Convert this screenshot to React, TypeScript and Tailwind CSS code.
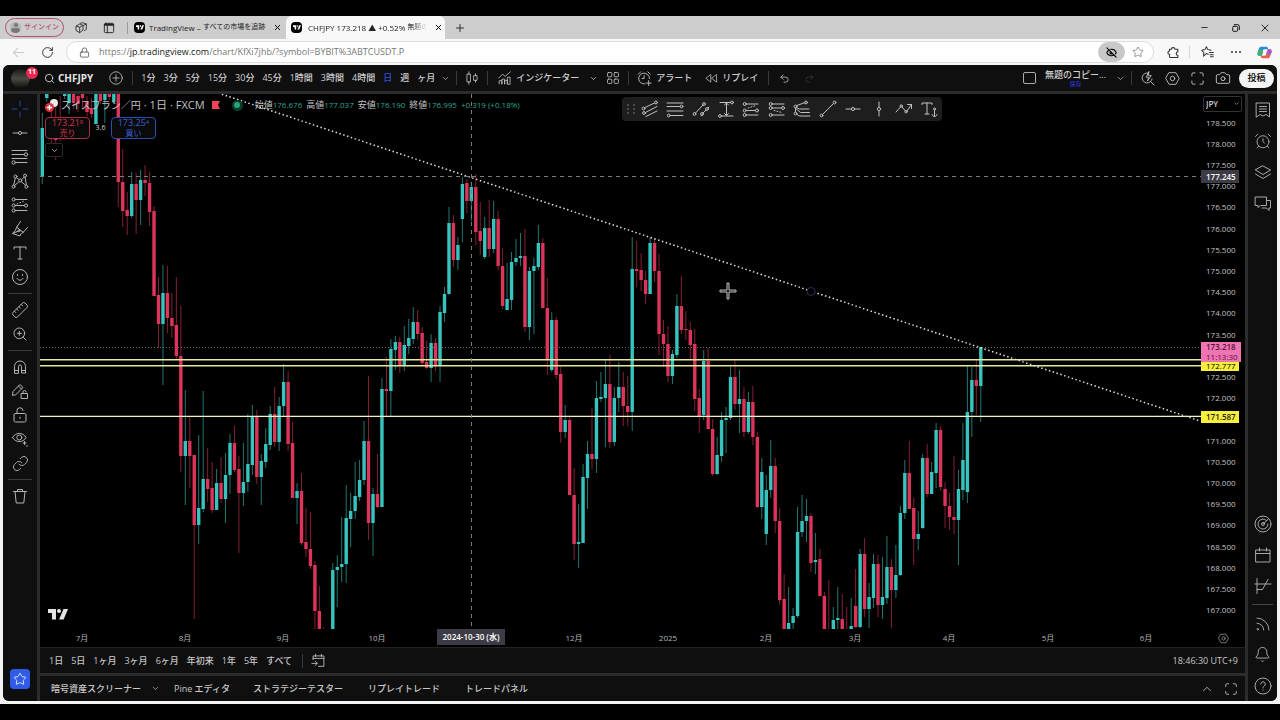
import type { ReactNode } from "react";
import {
  AlarmClock,
  Bell,
  Camera,
  ChevronDown,
  ChevronUp,
  EyeOff,
  Link,
  Lock,
  Maximize,
  Minus,
  Plus,
  Redo2,
  RotateCw,
  Rss,
  Ruler,
  Search,
  Star,
  Undo2,
  X,
  ZoomIn,
} from "lucide-react";

const UI_FONT = "font-['Open_Sans','Noto_Sans_CJK_JP',sans-serif]";

// u = up / d = down, then high, body top, body bottom, low
type Candle = ["u" | "d", number, number, number, number];

const FIRST_X = 42.3;
const STEP = 4.469;

const candles: Candle[] = [
  ["u", 113, 128, 177, 184], ["u", 94, 94, 98, 102], ["d", 100, 132, 136, 143], ["d", 100, 132, 140, 160], ["d", 96, 120, 130, 141],
  ["u", 94, 94, 96, 99], ["u", 94, 94, 103, 114], ["d", 94, 94, 103, 109], ["d", 94, 96, 104, 112], ["d", 94, 94, 98, 108],
  ["d", 96, 102, 112, 116], ["d", 98, 108, 114, 118], ["u", 94, 94, 124, 124], ["d", 94, 94, 101, 104], ["u", 94, 94, 100, 123],
  ["d", 94, 94, 97, 100], ["u", 94, 94, 102, 104], ["d", 94, 94, 182, 207], ["d", 149, 182, 211, 227], ["d", 192, 210, 216, 235],
  ["u", 172, 184, 216, 218], ["d", 173, 184, 200, 234], ["u", 170, 180, 200, 225], ["d", 165, 180, 183, 196], ["d", 172, 183, 212, 226],
  ["d", 206, 211, 296, 296], ["d", 277, 295, 324, 348], ["u", 265, 293, 324, 385], ["d", 266, 293, 318, 333], ["d", 293, 318, 326, 338],
  ["d", 277, 325, 356, 360], ["d", 306, 356, 456, 472], ["u", 390, 441, 456, 505], ["d", 416, 441, 456, 488], ["d", 455, 455, 525, 619],
  ["u", 435, 508, 525, 544], ["u", 391, 479, 509, 512], ["d", 448, 479, 489, 502], ["d", 462, 488, 510, 513], ["u", 469, 483, 510, 510],
  ["d", 457, 483, 499, 503], ["u", 453, 475, 499, 523], ["u", 434, 443, 475, 494], ["d", 426, 443, 470, 472], ["d", 456, 469, 493, 553],
  ["u", 443, 482, 493, 506], ["u", 414, 464, 482, 492], ["u", 405, 416, 465, 475], ["d", 410, 416, 477, 484], ["u", 454, 461, 477, 505],
  ["u", 428, 444, 462, 468], ["u", 406, 414, 445, 450], ["d", 387, 414, 442, 447], ["u", 397, 406, 442, 451], ["u", 364, 382, 406, 417],
  ["d", 371, 382, 444, 451], ["d", 422, 443, 498, 498], ["u", 483, 491, 498, 524], ["d", 473, 491, 543, 545], ["d", 508, 542, 549, 557],
  ["d", 512, 549, 566, 569], ["d", 561, 565, 611, 629], ["d", 586, 611, 629, 629], ["d", 627, 629, 629, 629], ["d", 629, 629, 629, 629],
  ["u", 563, 570, 629, 629], ["u", 555, 567, 570, 607], ["u", 517, 564, 567, 582], ["u", 485, 518, 564, 583], ["u", 493, 511, 519, 547],
  ["u", 462, 496, 511, 519], ["u", 460, 480, 497, 501], ["u", 421, 441, 480, 485], ["d", 376, 441, 523, 540], ["u", 488, 494, 523, 556],
  ["d", 454, 494, 507, 508], ["u", 378, 389, 507, 507], ["d", 357, 389, 391, 416], ["u", 339, 349, 391, 416], ["u", 336, 342, 350, 370],
  ["d", 337, 342, 366, 373], ["u", 326, 345, 366, 371], ["u", 319, 338, 346, 354], ["u", 307, 322, 339, 344], ["d", 310, 322, 334, 340],
  ["d", 327, 333, 363, 365], ["d", 341, 362, 368, 369], ["u", 334, 343, 368, 382], ["d", 338, 343, 366, 371], ["u", 306, 312, 366, 382],
  ["u", 287, 294, 313, 322], ["u", 207, 223, 294, 295], ["d", 215, 223, 260, 267], ["u", 237, 245, 260, 270], ["u", 177, 184, 219, 242],
  ["d", 179, 183, 201, 213], ["u", 182, 187, 201, 221], ["d", 174, 187, 232, 245], ["d", 202, 231, 241, 255], ["u", 217, 228, 257, 259],
  ["d", 200, 228, 249, 257], ["u", 201, 219, 249, 253], ["d", 211, 219, 266, 270], ["d", 248, 266, 306, 309], ["u", 263, 299, 310, 310],
  ["u", 252, 262, 300, 310], ["u", 239, 258, 262, 266], ["u", 233, 256, 258, 266], ["d", 229, 256, 327, 332], ["u", 267, 271, 327, 340],
  ["u", 258, 266, 271, 334], ["u", 225, 243, 267, 270], ["d", 238, 243, 308, 308], ["d", 278, 308, 360, 375], ["u", 312, 320, 370, 372],
  ["d", 317, 320, 375, 379], ["d", 367, 374, 432, 443], ["u", 405, 420, 432, 438], ["d", 416, 420, 495, 495], ["d", 468, 495, 544, 560],
  ["u", 504, 542, 544, 568], ["u", 464, 477, 543, 543], ["u", 441, 454, 478, 509], ["d", 408, 454, 459, 469], ["u", 381, 398, 459, 473],
  ["u", 372, 397, 399, 402], ["u", 359, 384, 398, 447], ["d", 355, 384, 442, 448], ["u", 387, 398, 442, 446], ["u", 362, 387, 398, 412],
  ["d", 372, 387, 406, 426], ["d", 376, 406, 412, 426], ["u", 237, 269, 412, 431], ["d", 241, 269, 271, 287], ["d", 253, 270, 280, 291],
  ["d", 271, 280, 294, 304], ["u", 237, 243, 294, 294], ["d", 239, 243, 271, 282], ["d", 254, 271, 334, 355], ["d", 320, 334, 344, 367],
  ["d", 326, 344, 376, 382], ["u", 350, 354, 376, 384], ["u", 294, 306, 355, 358], ["d", 276, 306, 330, 334], ["d", 311, 329, 330, 340],
  ["d", 322, 330, 345, 360], ["d", 329, 344, 399, 411], ["d", 389, 398, 416, 433], ["u", 350, 361, 415, 420], ["d", 348, 361, 429, 429],
  ["d", 419, 429, 474, 476], ["u", 437, 455, 474, 475], ["u", 412, 420, 456, 462], ["u", 407, 418, 420, 453], ["u", 367, 377, 418, 420],
  ["d", 359, 377, 404, 410], ["u", 370, 399, 404, 433], ["d", 387, 399, 432, 437], ["u", 392, 402, 432, 434], ["d", 386, 402, 437, 445],
  ["d", 432, 437, 507, 508], ["u", 458, 472, 507, 519], ["u", 475, 490, 534, 545], ["u", 440, 466, 490, 498], ["d", 458, 466, 521, 533],
  ["d", 508, 521, 600, 605], ["d", 574, 599, 629, 629], ["u", 587, 623, 629, 629], ["u", 608, 616, 623, 629], ["u", 507, 532, 616, 618],
  ["u", 495, 521, 532, 537], ["u", 499, 516, 521, 542], ["d", 513, 516, 563, 572], ["u", 533, 560, 562, 574], ["d", 549, 559, 596, 597],
  ["d", 592, 596, 629, 629], ["d", 580, 629, 629, 629], ["u", 607, 620, 629, 629], ["u", 587, 618, 620, 629], ["d", 594, 619, 629, 629],
  ["d", 607, 629, 629, 629], ["u", 598, 626, 629, 629], ["d", 569, 606, 627, 628], ["u", 549, 554, 627, 628], ["d", 538, 554, 609, 617],
  ["u", 583, 597, 609, 628], ["u", 554, 564, 598, 608], ["d", 555, 564, 605, 617], ["u", 557, 597, 605, 619], ["u", 536, 567, 598, 604],
  ["d", 559, 567, 590, 628], ["u", 545, 575, 590, 598], ["u", 506, 513, 575, 576], ["u", 460, 473, 513, 519], ["d", 441, 473, 509, 509],
  ["d", 498, 508, 539, 565], ["u", 511, 534, 539, 550], ["u", 454, 458, 528, 529], ["d", 444, 458, 494, 497], ["u", 462, 472, 494, 494],
  ["u", 423, 430, 473, 488], ["d", 426, 430, 487, 491], ["d", 482, 489, 506, 528], ["d", 493, 506, 517, 530], ["d", 456, 517, 520, 534],
  ["u", 470, 489, 520, 565], ["u", 423, 460, 490, 500], ["u", 366, 412, 492, 503], ["u", 367, 380, 412, 437], ["d", 359, 380, 386, 415],
  ["u", 347, 347, 386, 422],
];

// 171.500 sits right under the alert line label, so its row stays blank
const prices = Array.from({ length: 24 }, (_, i) => (178.5 - i * 0.5).toFixed(3));
const hiddenPrice = "171.500";

const months = [
  { label: "7月", at: 42 },
  { label: "8月", at: 145 },
  { label: "9月", at: 243 },
  { label: "10月", at: 337 },
  { label: "12月", at: 534 },
  { label: "2025", at: 628 },
  { label: "2月", at: 726 },
  { label: "3月", at: 815 },
  { label: "4月", at: 909 },
  { label: "5月", at: 1008 },
  { label: "6月", at: 1106 },
];

const intervals = ["1分", "3分", "5分", "15分", "30分", "45分", "1時間", "3時間", "4時間", "日", "週", "ヶ月"];
const ranges = ["1日", "5日", "1ヶ月", "3ヶ月", "6ヶ月", "年初来", "1年", "5年", "すべて"];

const quotes = [
  { label: "始値", value: "176.676" },
  { label: "高値", value: "177.037" },
  { label: "安値", value: "176.190" },
  { label: "終値", value: "176.995" },
];

function Icon({ children, className = "size-[18px]" }: { children: ReactNode; className?: string }) {
  return (
    <svg
      viewBox="0 0 18 18"
      fill="none"
      stroke="currentColor"
      strokeLinecap="round"
      strokeLinejoin="round"
      className={`shrink-0 ${className}`}
      aria-hidden="true"
    >
      {children}
    </svg>
  );
}

function TvMark({ className }: { className: string }) {
  return (
    <svg viewBox="0 0 20 11" fill="currentColor" className={className} aria-hidden="true">
      <path d="M0 0h8v10.500H4V4H0z" />
      <circle cx="11" cy="2" r="2" />
      <path d="M15.500 0H20l-4.400 10.500h-4.500z" />
    </svg>
  );
}

type Tool = { name: string; icon: ReactNode; active?: boolean };

const drawTools: Tool[][] = [
  [
    { name: "クロス", active: true, icon: <Icon><path d="M9 1v5M9 12v5M1 9h5M12 9h5" /></Icon> },
    { name: "トレンドライン", icon: <Icon><path d="M2 9h5M11 9h5" /><circle cx="9" cy="9" r="1.600" /></Icon> },
    {
      name: "フィボナッチ",
      icon: (
        <Icon>
          <path d="M1 2.500h15M1 6.500h12M1 10.500h15M5 14.500h11" />
          <circle cx="15" cy="6.500" r="1.700" />
          <circle cx="2.700" cy="14.500" r="1.700" />
        </Icon>
      ),
    },
    {
      name: "パターン",
      icon: (
        <Icon>
          <path d="M2.500 14 4.500 5l5 3.500L14 4.500 15.500 14 9.500 9z" />
          <circle cx="4.500" cy="4.500" r="1.500" fill="#0f0f0f" />
          <circle cx="14" cy="3.700" r="1.500" fill="#0f0f0f" />
          <circle cx="9.300" cy="8.500" r="1.500" fill="#0f0f0f" />
          <circle cx="2.500" cy="14.700" r="1.500" fill="#0f0f0f" />
          <circle cx="15.300" cy="14.700" r="1.500" fill="#0f0f0f" />
        </Icon>
      ),
    },
    {
      name: "予測",
      icon: (
        <Icon>
          <path d="M4.500 3.500H16M4.500 9.500h8.500M4.500 14.500H16" />
          <path d="M6 8l7-3" strokeDasharray="1 2" />
          <circle cx="2.700" cy="3.500" r="1.600" />
          <circle cx="2.700" cy="9.500" r="1.600" />
          <circle cx="15" cy="9.500" r="1.600" />
          <circle cx="2.700" cy="14.500" r="1.600" />
        </Icon>
      ),
    },
    {
      name: "ブラシ",
      icon: <Icon><path d="M9.500 1.500 5.500 7.500M16.500 7.500l-4.500 5M5.500 7.500C5 10 3.500 11.500 1.500 13.500l7.500 2.500c0-1.500 1-2.500 3-3.500zM1.500 13.500l6-2.500" /><circle cx="8" cy="10.800" r="1" /></Icon>,
    },
    { name: "テキスト", icon: <Icon><path d="M3 5V3h12v2M9 3v12M7 15h4" /></Icon> },
    {
      name: "アイコン",
      icon: (
        <Icon>
          <circle cx="9" cy="9" r="7.500" />
          <path d="M6.500 6.500v1M11.500 6.500v1M6 10.500c1.500 2.300 4.500 2.300 6 0" />
        </Icon>
      ),
    },
  ],
  [
    { name: "計測", icon: <Ruler className="size-[18px] -scale-x-100" strokeWidth={1.3} /> },
    { name: "ズームイン", icon: <ZoomIn className="size-[16px]" strokeWidth={1.5} /> },
  ],
  [
    {
      name: "マグネット",
      icon: <Icon><path d="M3.500 15V8.500a5.500 5.500 0 0 1 11 0V15h-4V8.500a1.500 1.500 0 0 0-3 0V15zM3.500 12.500h4M10.500 12.500h4" /></Icon>,
    },
    {
      name: "描画モードを維持",
      icon: (
        <Icon>
          <path d="M1.500 13 2 9.500 9 2.500l3 3L5 12.500zM7.500 4l3 3" />
          <path d="M10.500 11.500h6v5h-6zM12 11.500v-1.500a1.500 1.500 0 0 1 3 0" />
        </Icon>
      ),
    },
    {
      name: "ロック",
      icon: (
        <Icon>
          <rect x="3" y="7.500" width="12" height="8.500" rx="1.500" />
          <path d="M6 7.500V5a3 3 0 0 1 6-.500M9 11.200v1.200" />
        </Icon>
      ),
    },
    {
      name: "非表示",
      icon: (
        <Icon>
          <path d="M1.500 7.500C4.500 2 12 2 15 7.500 12 13 4.500 13 1.500 7.500z" />
          <circle cx="8.300" cy="7.500" r="2.500" />
          <path d="M12 13l3 0M13.500 11.500v3M15.500 16h1" />
        </Icon>
      ),
    },
    { name: "リンク", icon: <Link className="size-[17px]" strokeWidth={1.3} /> },
  ],
  [
    { name: "削除", icon: <Icon><path d="M2.500 4.500h13M6.500 4.500V2.500h5v2M4 4.500 5.200 16h7.600L14 4.500" /></Icon> },
  ],
];

const favoriteTools: Tool[] = [
  {
    name: "平行チャネル",
    icon: (
      <Icon>
        <path d="M4 7.500 13.500 3M4.500 12.500 16 6.500M5 16.500l11-5.500" />
        <circle cx="2.500" cy="8.500" r="1.400" />
        <circle cx="15" cy="2.500" r="1.400" />
        <circle cx="3" cy="13" r="1.400" />
      </Icon>
    ),
  },
  {
    name: "フィボナッチリトレースメント",
    icon: (
      <Icon>
        <path d="M1 3h16M1 6.500h13M1 11h16M4.500 15.500H17" />
        <circle cx="15.500" cy="6.500" r="1.400" />
        <circle cx="2.700" cy="15.500" r="1.400" />
      </Icon>
    ),
  },
  {
    name: "フラットチャネル",
    icon: (
      <Icon>
        <path d="M3.500 13 11 5M9 16l2-1.500M11 13l3-3M16 8l1-1" />
        <circle cx="2.500" cy="14" r="1.400" />
        <circle cx="12" cy="4" r="1.400" />
        <circle cx="10" cy="14" r="1.400" />
        <circle cx="15" cy="9" r="1.400" />
      </Icon>
    ),
  },
  {
    name: "価格範囲",
    icon: (
      <Icon>
        <path d="M3 2.500h10.500M4.500 16H16M9.500 3v12.500M7.500 5l2-2 2 2M7.500 13.500l2 2 2-2" />
        <circle cx="15" cy="2.500" r="1.400" />
        <circle cx="3" cy="16" r="1.400" />
      </Icon>
    ),
  },
  {
    name: "ロングポジション",
    icon: (
      <Icon>
        <path d="M4.500 4H16M4.500 10.500h8.500M4.500 15H16" />
        <path d="M6 8l8-2.500" strokeDasharray="1 2" />
        <circle cx="2.700" cy="4" r="1.500" />
        <circle cx="2.700" cy="10.500" r="1.500" />
        <circle cx="15" cy="10.500" r="1.500" />
        <circle cx="2.700" cy="15" r="1.500" />
      </Icon>
    ),
  },
  {
    name: "ショートポジション",
    icon: (
      <Icon>
        <path d="M4.500 4H16M4.500 8h8.500M4.500 15H16" />
        <path d="M6 10.500l8 2" strokeDasharray="1 2" />
        <circle cx="2.700" cy="4" r="1.500" />
        <circle cx="2.700" cy="8" r="1.500" />
        <circle cx="15" cy="8" r="1.500" />
        <circle cx="2.700" cy="15" r="1.500" />
      </Icon>
    ),
  },
  {
    name: "フィボナッチスピード",
    icon: (
      <Icon>
        <path d="M2.500 8v4M4 5.500 12 2.500M3.500 7.500l3 1.500H16M3.500 9l4 3.500h9M4 14.500l2.500 1.500H17" />
        <circle cx="2.500" cy="6.500" r="1.400" />
        <circle cx="13" cy="2.500" r="1.400" />
        <circle cx="2.500" cy="13.500" r="1.400" />
      </Icon>
    ),
  },
  {
    name: "トレンドライン",
    icon: (
      <Icon>
        <path d="M3.500 14.500l11-11" />
        <circle cx="2.500" cy="15.500" r="1.400" />
        <circle cx="15.500" cy="2.500" r="1.400" />
      </Icon>
    ),
  },
  { name: "水平線", icon: <Icon><path d="M2 9h5M11 9h5" /><circle cx="9" cy="9" r="1.600" /></Icon> },
  { name: "垂直線", icon: <Icon><path d="M9 2v5M9 11v5" /><circle cx="9" cy="9" r="1.600" /></Icon> },
  {
    name: "パス",
    icon: <Icon><path d="M1 12 5.500 7M7 7l3.500 4M12 11l4.500-6.500M12.500 4.500h4v4" /><circle cx="6.200" cy="6" r="1.200" /><circle cx="11" cy="11.700" r="1.200" /></Icon>,
  },
  {
    name: "アンカーテキスト",
    icon: <Icon><path d="M2 4.500V3h10v1.500M7 3v11M5 14h4M14.500 10v6.500M12 14.500c.500 1.300 1.300 2 2.500 2s2-.700 2.500-2" /><circle cx="14.500" cy="9" r="1" /></Icon>,
  },
];

const sideTop: Tool[] = [
  { name: "ウォッチリスト", icon: <Icon><path d="M2.500 2h13v14L12 13.500 9 15l-3-1.500L2.500 16zM5.500 5.500h7M5.500 8h7M5.500 10.500h7" /></Icon> },
  { name: "アラート", icon: <AlarmClock className="size-[18px]" strokeWidth={1.3} /> },
  { name: "オブジェクトツリー", icon: <Icon><path d="M9 3l7.500 4L9 11.500 1.500 7zM1.500 11 9 15.500l7.500-4.500" /></Icon> },
  { name: "チャット", icon: <Icon><path d="M1.500 3h11v8.500h-6L4 13.500v-2H1.500zM12.500 6.500h4V14H15v2.500L12.500 14H8" /></Icon> },
];

const sideMiddle: Tool[] = [
  {
    name: "スクリーナー",
    icon: (
      <Icon>
        <circle cx="9" cy="9" r="8" />
        <path d="M12.500 5.500a5 5 0 1 0 1.500 3.500M9 9l5.500-5" />
        <circle cx="9" cy="9" r="1.500" />
      </Icon>
    ),
  },
  { name: "カレンダー", icon: <Icon><path d="M2 4h14v12H2zM2 7.500h14M5.500 2v3M12.500 2v3" /></Icon> },
  { name: "マイスクリプト", icon: <Icon><path d="M3 1.500v15M1 7h16M3 12.500h5.500L14 2.500" /></Icon> },
];

const sideBottom: Tool[] = [
  { name: "ストリーム", icon: <Rss className="size-[18px]" strokeWidth={1.3} /> },
  { name: "通知", icon: <Bell className="size-[17px]" strokeWidth={1.4} /> },
  {
    name: "ヘルプ",
    icon: (
      <Icon>
        <circle cx="9" cy="9" r="8" />
        <path d="M6.700 7a2.300 2.300 0 1 1 3.500 2c-.800.500-1.200.900-1.200 2M9 13v.300" />
      </Icon>
    ),
  },
];

function TabIcon() {
  return (
    <span className="flex size-[11px] shrink-0 items-center justify-center rounded-sm bg-black text-white">
      <TvMark className="h-[5px] w-[8px]" />
    </span>
  );
}

function BrowserTabs() {
  return (
    <>
      <div className="flex w-[156px] items-center gap-1 pr-1 pl-1">
        <TabIcon />
        <span className="flex flex-1 items-center whitespace-nowrap text-[8px] text-[#222]">
          TradingView –&nbsp;<span className="text-[7px]">すべての市場を追跡</span>
        </span>
        <button aria-label="タブを閉じる">
          <X className="size-[9px] text-black" strokeWidth={2.5} />
        </button>
      </div>
      <div className="flex w-[159px] items-center gap-[6px] rounded-t-md bg-[#f8f8f8] pr-[5px] pl-[5px]">
        <TabIcon />
        <span className="flex flex-1 items-center whitespace-nowrap mask-r-from-85% text-[8px] text-[#222]">
          CHFJPY 173.218 ▲ +0.52%&nbsp;<span className="text-[7px]">無題の</span>
        </span>
        <button aria-label="タブを閉じる">
          <X className="size-[9px] text-black" strokeWidth={2.5} />
        </button>
      </div>
    </>
  );
}

function BrowserChrome() {
  return (
    <>
      <div className="flex h-[23px] shrink-0 bg-[#cdcdcd]">
        <div className="flex items-center pl-[5px]">
          <button className="flex h-[19px] w-[59px] items-center gap-[3px] rounded-full border border-[#b4506a] pl-1 text-[7px] text-[#b0304e]">
            <span className="relative block size-[11px] overflow-hidden rounded-full bg-[#b5b5b5]">
              <span className="mx-auto mt-px block size-[4px] rounded-full bg-[#777]" />
              <span className="mx-auto mt-px block h-[5px] w-[9px] rounded-full bg-[#777]" />
            </span>
            サインイン
          </button>
          <button aria-label="ワークスペース" className="ml-[11px] text-[#333]">
            <Icon className="size-[12px]">
              <path d="M2 6l5-3 5 2v7l-5 4-5-3zM2 6l5 2v8M7 8l5-3M8 2l3-1 6 2v8l-3 2M17 3l-4 2" strokeWidth="1.400" />
            </Icon>
          </button>
          <button aria-label="タブ操作" className="ml-4 text-[#222]">
            <Icon className="size-[12px]">
              <rect x="2" y="2" width="14" height="14" rx="2" strokeWidth="1.400" />
              <path d="M3 4h12" strokeWidth="3" />
              <path d="M6.500 6v10" strokeWidth="1.400" />
            </Icon>
          </button>
          <div className="mr-[2px] ml-3 h-3 w-px bg-[#999]" />
        </div>
        <BrowserTabs />
        <button aria-label="新しいタブ" className="ml-[9px]">
          <Plus className="size-[12px] text-[#333]" />
        </button>
        <div className="ml-auto flex items-center gap-[18px] pr-[9px] text-black">
          <button aria-label="最小化"><Minus className="size-[9px]" /></button>
          <button aria-label="元に戻す" className="ml-1">
            <Icon className="size-[10px]">
              <rect x="3" y="6" width="9" height="9" rx="2" strokeWidth="1.600" />
              <path d="M6 3h6a3 3 0 0 1 3 3v6" strokeWidth="1.600" />
            </Icon>
          </button>
          <button aria-label="閉じる"><X className="size-[12px]" strokeWidth={1.6} /></button>
        </div>
      </div>
      <div className="flex h-[26px] shrink-0 items-center bg-[#f8f8f8] pr-2 pl-3 text-[#333]">
        <button aria-label="戻る" className="text-[#c8c8c8]">
          <Icon className="size-[13px]"><path d="M2 9h14M8 3 2 9l6 6" strokeWidth="1.400" /></Icon>
        </button>
        <button aria-label="更新" className="ml-4">
          <RotateCw className="size-[13px]" strokeWidth={1.8} />
        </button>
        <div className="ml-3 flex h-[22px] flex-1 items-center rounded-full border border-[#dedede] bg-white pl-3">
          <Lock className="size-[11px] text-[#555]" strokeWidth={1.8} />
          <a href="#chart" className="ml-[9px] text-[9px] text-[#777]">
            https://<span className="text-[#222]">jp.tradingview.com</span>/chart/KfXi7jhb/?symbol=BYBIT%3ABTCUSDT.P
          </a>
          <button aria-label="プライバシー" className="ml-auto flex h-5 w-[27px] items-center justify-center rounded-full bg-[#c8c8c8] text-black">
            <EyeOff className="size-[11px]" strokeWidth={2.6} />
          </button>
          <button aria-label="お気に入りに追加" className="mr-[9px] ml-[7px]">
            <Star className="size-[12px] text-[#777]" strokeWidth={1.6} />
          </button>
        </div>
        <button aria-label="拡張機能" className="ml-[13px]">
          <Icon className="size-[13px]">
            <path d="M6 4.500c0-3 5-3 5 0h4v3.500c-3 0-3 5 0 5v3H5c-1 0-1.500-.500-1.500-1.500v-3c-3 0-3-4.500 0-4.500V4.500z" strokeWidth="1.500" />
          </Icon>
        </button>
        <div className="mx-[9px] h-3 w-px bg-[#d5d5d5]" />
        <button aria-label="お気に入り" className="ml-[2px]">
          <Icon className="size-[13px]">
            <path d="M10 11.500 7.500 10.500 3.500 14l.500-5L1 6l4.500-1 2-4 2 4L14 6M11.500 9H17M12.500 12H17M13 15h4" strokeWidth="1.400" />
          </Icon>
        </button>
        <button aria-label="設定など" className="ml-[17px] flex gap-[2px]">
          <span className="size-[2px] rounded-full bg-[#333]" />
          <span className="size-[2px] rounded-full bg-[#333]" />
          <span className="size-[2px] rounded-full bg-[#333]" />
        </button>
        <button aria-label="Copilot" className="ml-4">
          <svg viewBox="0 0 18 18" className="size-[15px]">
            <path d="M5 2h6c2 0 2 1 2.500 3H9C7.500 5 7 6 6.500 8L5 13H3C0 13 0 10 1 8l1.500-4C3 2.500 4 2 5 2z" fill="#2a8be0" />
            <path d="M1 9c0 3 1 4 3 4h2l1.500-5L5 5 2 6z" fill="#46b06a" />
            <path d="M13 5h2c3 0 3 3 2 5l-1.500 4c-.500 1.500-1.500 2-2.500 2H7c-2 0-2-1-2.500-3H9c1.500 0 2-1 2.500-3z" fill="#e8604f" />
            <path d="M13 5h2c3 0 3 3 2 5l-2 2-4-2z" fill="#a45ad8" />
          </svg>
        </button>
      </div>
    </>
  );
}

function Divider({ className = "" }: { className?: string }) {
  return <div className={`h-[14px] w-px shrink-0 bg-[#3a3a3a] ${className}`} />;
}

function Header() {
  return (
    <header className="flex h-[26px] shrink-0 items-center bg-[#0f0f0f] text-[9px] font-medium text-[#cfcfcf]">
      <button aria-label="メニュー" className="relative ml-2 size-[19px] shrink-0">
        <span className="block size-full rounded-full bg-linear-to-b from-[#1c1c1a] via-[#4a4a44] to-[#14120f]" />
        <span className="absolute -top-[2px] -right-2 flex size-[12px] items-center justify-center rounded-full bg-[#e8294f] text-[7px] font-bold text-white">
          11
        </span>
      </button>
      <button className="ml-[14px] flex items-center gap-[3px] text-[10px] font-bold text-[#e4e4e4]">
        <Search className="size-[11px]" strokeWidth={1.8} />
        CHFJPY
      </button>
      <button aria-label="シンボルを比較" className="mr-[9px] ml-4">
        <Icon className="size-[14px]"><circle cx="9" cy="9" r="8" /><path d="M9 5v8M5 9h8" /></Icon>
      </button>
      <Divider />
      <nav className="ml-2 flex gap-2">
        {intervals.map((interval) => (
          <button key={interval} className={`whitespace-nowrap ${interval === "日" ? "text-[#2f4fd8]" : ""}`}>
            {interval}
          </button>
        ))}
      </nav>
      <button aria-label="時間足" className="ml-[6px]"><ChevronDown className="size-[9px]" strokeWidth={1.8} /></button>
      <Divider className="mx-[6px]" />
      <button aria-label="ローソク足" className="mx-[2px]">
        <Icon className="size-[14px]"><path d="M3 4h4v10H3zM5 1v3M5 14v3M11.500 6h4v6h-4zM13.500 3.500V6M13.500 12v2.500" /></Icon>
      </button>
      <Divider className="mx-[6px]" />
      <button className="ml-1 flex items-center gap-1 whitespace-nowrap">
        <Icon className="size-[14px]"><path d="M1 9l5-5 3 3 7-6M1.500 16.500v-4H5v4M5 16.500v-6h3.500v6M8.500 16.500V12H12v4.500M12 16.500V8h3.500v8.500z" /></Icon>
        インジケーター
      </button>
      <button aria-label="お気に入り" className="ml-[10px]"><ChevronDown className="size-[9px]" strokeWidth={1.8} /></button>
      <button aria-label="テンプレート" className="ml-2">
        <Icon className="size-[14px]">
          <rect x="2" y="2" width="5.500" height="5.500" rx="1" /><rect x="10.500" y="2" width="5.500" height="5.500" rx="1" />
          <rect x="2" y="10.500" width="5.500" height="5.500" rx="1" /><rect x="10.500" y="10.500" width="5.500" height="5.500" rx="1" />
        </Icon>
      </button>
      <Divider className="mx-2" />
      <button className="flex items-center gap-1 whitespace-nowrap">
        <Icon className="size-[15px]"><path d="M15 9a6.500 6.500 0 1 0-5.500 6.500M8.500 5.500V9H6M1.500 4l3-3M13 1l3 3M14 11.500v6M11 14.500h6" /></Icon>
        アラート
      </button>
      <button className="ml-[13px] flex items-center gap-1 whitespace-nowrap">
        <Icon className="size-[13px]"><path d="M8 4v10L1.500 9zM16 4v10L9.500 9z" /></Icon>
        リプレイ
      </button>
      <Divider className="mx-[10px]" />
      <button aria-label="元に戻す"><Undo2 className="size-[11px]" strokeWidth={1.6} /></button>
      <button aria-label="やり直す" className="ml-[14px] text-[#3c3c3c]"><Redo2 className="size-[11px]" strokeWidth={1.6} /></button>

      <div className="ml-auto flex items-center pr-[3px]">
        <button aria-label="レイアウト" className="h-[12px] w-[13px] rounded-xs border border-[#aaa]" />
        <button className="ml-[9px] flex flex-col items-center whitespace-nowrap">
          <span className="leading-[11px]">無題のコピー...</span>
          <span className="text-[6px] leading-[8px] text-[#2c34d0]">保存</span>
        </button>
        <button aria-label="レイアウト一覧" className="ml-[10px]"><ChevronDown className="size-[9px]" strokeWidth={1.8} /></button>
        <Divider className="ml-[6px]" />
        <div className="mr-2 ml-2 flex items-center gap-[10px]">
          <button aria-label="クイック検索">
            <Icon className="size-[15px]"><path d="M10 2.500a6 6 0 1 0 4.500 7M13 13l4 4M10.500 1 7.500 7.500h3L9 12l4.500-6.500h-3z" /></Icon>
          </button>
          <button aria-label="設定">
            <Icon className="size-[15px]"><path d="M5 2h8l4 7-4 7H5L1 9z" /><circle cx="9" cy="9" r="2.700" /></Icon>
          </button>
          <button aria-label="全画面"><Maximize className="size-[15px]" strokeWidth={1.4} /></button>
          <button aria-label="スナップショット"><Camera className="size-[16px]" strokeWidth={1.3} /></button>
        </div>
        <button className="h-[19px] w-[35px] rounded-full bg-[#f4f4f4] text-[9px] font-medium text-black">投稿</button>
      </div>
    </header>
  );
}

function DrawToolbar() {
  return (
    <aside className="flex w-[34px] shrink-0 flex-col items-center bg-[#0f0f0f] pt-[3px] pb-3 text-[#b4b4b4]">
      {drawTools.map((group, i) => (
        <div key={i} className="flex flex-col items-center">
          {i > 0 && <div className="my-1 h-px w-6 bg-[#3a3a3a]" />}
          {group.map((tool) => (
            <button
              key={tool.name}
              aria-label={tool.name}
              className={`flex h-6 w-[34px] items-center justify-center ${tool.active ? "text-[#2746a8]" : ""}`}
            >
              {tool.icon}
            </button>
          ))}
        </div>
      ))}
      <button aria-label="お気に入りツールバー" className="mt-auto flex size-5 items-center justify-center rounded-sm bg-[#2f5be8] text-white">
        <Star className="size-[14px]" strokeWidth={1.4} />
      </button>
    </aside>
  );
}

function SideToolbar() {
  const renderTool = (tool: Tool) => (
    <button key={tool.name} aria-label={tool.name} className="flex h-[31px] items-center justify-center">
      {tool.icon}
    </button>
  );

  return (
    <aside className="flex w-[29px] shrink-0 flex-col bg-[#0f0f0f] text-[#a8a8a8]">
      {sideTop.map(renderTool)}
      <div className="mt-auto flex flex-col">{sideMiddle.map(renderTool)}</div>
      <div className="mx-1 my-[3px] h-px bg-[#444]" />
      {sideBottom.map(renderTool)}
    </aside>
  );
}

function CandleChart() {
  return (
    <svg viewBox="40 94 1161 535" preserveAspectRatio="none" className="absolute inset-0 h-full w-full">
      <line x1="40" x2="1201" y1="347.500" y2="347.500" stroke="#6a6a6a" strokeDasharray="1 2" />
      {candles.map(([dir, high, top, bottom, low], i) => {
        const x = FIRST_X + i * STEP;
        const color = dir === "u" ? "#38c4be" : "#dc345a";
        return (
          <g key={i}>
            <line x1={x} x2={x} y1={high} y2={low} stroke={color} strokeOpacity="0.6" />
            <rect x={x - 1.7} y={top} width="3.400" height={bottom - top} fill={color} />
          </g>
        );
      })}
      <g stroke="#e6e69c" strokeWidth="1.600">
        <line x1="40" x2="1201" y1="359.700" y2="359.700" />
        <line x1="40" x2="1201" y1="365.700" y2="365.700" />
        <line x1="40" x2="1201" y1="416.400" y2="416.400" stroke="#f4f4be" strokeWidth="1.300" />
      </g>
      <line x1="218" x2="1200" y1="93" y2="421" stroke="#dcdcdc" strokeWidth="1.500" strokeDasharray="1.500 2.500" />
      <g stroke="#7c7c7c" strokeDasharray="4 4">
        <line x1="40" x2="1201" y1="176.500" y2="176.500" />
        <line x1="471.500" x2="471.500" y1="94" y2="629" />
      </g>
      <circle cx="811" cy="291.500" r="4" fill="#000" stroke="#26305c" />
      {/* mouse pointer */}
      <path
        d="M727 283h2v7h7v2h-7v7h-2v-7h-7v-2h7z"
        fill="#222"
        stroke="#bdbdbd"
      />
    </svg>
  );
}

function Legend() {
  return (
    <div className="absolute top-[3px] left-[5px]">
      <div className="flex h-4 items-center whitespace-nowrap text-[#c4c4c4]">
        <span className="relative block size-[13px]">
          <span className="absolute top-0 right-0 size-[8px] rounded-full bg-[#f0e8e8]" />
          <span className="absolute bottom-0 left-0 flex size-[9px] items-center justify-center rounded-full bg-[#d8323c]">
            <Plus className="size-[7px] text-white" strokeWidth={5} />
          </span>
        </span>
        <h1 className="ml-[3px] flex gap-[3px] text-[11px]">
          <span className="text-[10px] leading-4">スイスフラン／円</span>
          <span>·</span>
          <span>1日</span>
          <span>·</span>
          <span>FXCM</span>
        </h1>
        <svg viewBox="0 0 8 8" className="ml-[7px] size-2" fill="#f04456">
          <path d="M0 0h8L6 4l2 4H0z" />
        </svg>
        <span className="ml-3 flex size-[11px] items-center justify-center rounded-full bg-[#0c3b2c]">
          <span className="size-[6px] rounded-full bg-[#22a67c]" />
        </span>
        <dl className="ml-3 flex items-center gap-1 text-[8px]">
          {quotes.map((quote) => (
            <div key={quote.label} className="flex items-center">
              <dt className="text-[9px]">{quote.label}</dt>
              <dd className="text-[#2ba593]">{quote.value}</dd>
            </div>
          ))}
          <div className="text-[#2ba593]">+0.319 (+0.18%)</div>
        </dl>
      </div>
      <div className="mt-1 flex items-center text-center text-[9px] leading-[10px]">
        <button className="flex h-[22px] w-[45px] flex-col items-center justify-center rounded border border-[#a83048] bg-[#0a0a0a] text-[#dc3048]">
          <span className="flex">173.21<span className="text-[6px] leading-[8px]">8</span></span>
          <span className="text-[8px] leading-[10px]">売り</span>
        </button>
        <span className="w-[21px] text-[7px] text-[#d0d0d0]">3.6</span>
        <button className="flex h-[22px] w-[45px] flex-col items-center justify-center rounded border border-[#2c4fae] bg-[#0a0a0a] text-[#3560d8]">
          <span className="flex">173.25<span className="text-[6px] leading-[8px]">4</span></span>
          <span className="text-[8px] leading-[10px]">買い</span>
        </button>
      </div>
      <button aria-label="凡例を閉じる" className="mt-1 flex h-[14px] w-[18px] items-center justify-center rounded-xs border border-[#2a2a2a] bg-black text-[#ccc]">
        <ChevronDown className="size-[9px]" />
      </button>
    </div>
  );
}

function FavoriteToolbar() {
  return (
    <div className="absolute top-[3px] left-[582px] flex h-6 w-[320px] items-center rounded bg-[#1e1e1e] text-[#c0c0c0]">
      <div className="ml-[5px] grid w-[10px] grid-cols-2 gap-[2px]">
        {[0, 1, 2, 3, 4, 5].map((dot) => (
          <span key={dot} className="size-[2px] bg-[#4c4c4c]" />
        ))}
      </div>
      {favoriteTools.map((tool) => (
        <button key={tool.name} aria-label={tool.name} className="flex flex-1 items-center justify-center">
          {tool.icon}
        </button>
      ))}
    </div>
  );
}

function TimeAxis() {
  return (
    <div className="relative h-[18px] shrink-0 text-[8px] text-[#b4b4b4]">
      {months.map((month) => (
        <span
          key={month.label}
          className="absolute top-[3px] -translate-x-1/2 leading-3"
          style={{ left: `${(month.at / 1161) * 100}%` }}
        >
          {month.label}
        </span>
      ))}
      <span
        className="absolute top-0 flex h-4 w-[68px] -translate-x-1/2 items-center justify-center whitespace-nowrap bg-[#3d3b45] font-semibold text-white"
        style={{ left: `${(431 / 1161) * 100}%` }}
      >
        2024-10-30 (水)
      </span>
    </div>
  );
}

function PriceAxis() {
  return (
    <div className="relative flex w-11 shrink-0 flex-col text-[8px] text-[#c0c0c0]">
      <label className="relative mt-[2px] ml-[2px] block h-4 w-[39px] shrink-0">
        <span className="sr-only">通貨</span>
        <select className="block h-full w-full appearance-none rounded-xs border border-[#333] bg-black py-0 pl-[2px] text-[8px] leading-[14px] font-semibold text-[#cfcfcf]">
          <option>JPY</option>
        </select>
        <ChevronDown className="pointer-events-none absolute top-1 right-[2px] size-[7px]" />
      </label>
      <ul className="flex flex-1 flex-col pb-2 pl-[5px]">
        {prices.map((price) => (
          <li key={price} className="flex flex-1 items-center">{price === hiddenPrice ? "" : price}</li>
        ))}
      </ul>
      <div className="flex h-[18px] shrink-0 items-center justify-center">
        <button aria-label="スケール設定">
          <Icon className="size-[11px]"><path d="M5 2h8l4 7-4 7H5L1 9z" /><circle cx="9" cy="9" r="2.700" /></Icon>
        </button>
      </div>
      <span className="absolute top-[76px] left-0 h-[13px] w-[38px] bg-[#3d3b45] pl-[5px] font-semibold leading-[13px] text-white">
        177.245
      </span>
      <span className="absolute top-[266px] left-0 h-[11px] w-[38px] bg-[#f6f03c] pl-[5px] leading-[11px] text-black">
        172.777
      </span>
      <span className="absolute top-[248px] left-0 w-10 bg-[#ee74b4] pl-[5px] font-semibold leading-[10px] text-[#5c1038]">
        173.218
        <span className="block font-normal">11:13:30</span>
      </span>
      <span className="absolute top-[317px] left-0 h-[12px] w-[38px] bg-[#f6f03c] pl-[5px] font-semibold leading-[12px] text-[#222]">
        171.587
      </span>
    </div>
  );
}

export default function App() {
  return (
    <div className={`flex h-screen flex-col overflow-hidden bg-black py-4 ${UI_FONT}`}>
      <div className="flex min-h-0 flex-1 flex-col bg-[#f4f4f4]">
        <BrowserChrome />
        <div id="chart" className="mx-[3px] mb-[3px] flex min-h-0 flex-1 flex-col gap-[3px] overflow-hidden rounded-md bg-[#2c2c2c]">
          <Header />
          <div className="flex min-h-0 flex-1 gap-[3px]">
            <DrawToolbar />
            <main className="flex min-w-0 flex-1 flex-col">
              <div className="flex min-h-0 flex-1 bg-black">
                <div className="flex min-w-0 flex-1 flex-col">
                  <div className="relative flex-1">
                    <CandleChart />
                    <Legend />
                    <FavoriteToolbar />
                    <TvMark className="absolute bottom-[9px] left-2 h-[11px] w-5 text-[#e4e4e4]" />
                  </div>
                  <TimeAxis />
                </div>
                <PriceAxis />
              </div>
              <div className="flex h-[26px] shrink-0 items-center border-t border-[#222] bg-[#0f0f0f] pr-[7px] pl-[9px] text-[9px] font-medium text-[#c8c8c8]">
                <div className="flex gap-2">
                  {ranges.map((range) => (
                    <button key={range} className="whitespace-nowrap">{range}</button>
                  ))}
                </div>
                <Divider className="mr-2 ml-[10px]" />
                <button aria-label="日付へ移動">
                  <Icon className="size-[15px]"><path d="M2.500 8V3.500h13v12.500H9M2.500 6.500h13M5.500 1.500v3M12.500 1.500v3M1 12.500h6.500M5 10l2.500 2.500L5 15" /></Icon>
                </button>
                <time className="ml-auto">18:46:30 UTC+9</time>
              </div>
              <div className="mt-[3px] flex h-[25px] shrink-0 items-center bg-[#0f0f0f] pr-[7px] pl-[11px] text-[9px] font-medium text-[#c8c8c8]">
                <button className="flex items-center gap-[10px]">
                  暗号資産スクリーナー
                  <ChevronDown className="size-[9px]" strokeWidth={1.8} />
                </button>
                <button className="ml-[14px]">Pine エディタ</button>
                <div className="ml-[23px] flex gap-[25px]">
                  <button>ストラテジーテスター</button>
                  <button>リプレイトレード</button>
                  <button>トレードパネル</button>
                </div>
                <div className="ml-auto flex items-center gap-[10px]">
                  <button aria-label="パネルを開く"><ChevronUp className="size-[14px]" strokeWidth={1.4} /></button>
                  <button aria-label="パネルを最大化"><Maximize className="size-[14px]" strokeWidth={1.4} /></button>
                </div>
              </div>
            </main>
            <SideToolbar />
          </div>
        </div>
      </div>
    </div>
  );
}
